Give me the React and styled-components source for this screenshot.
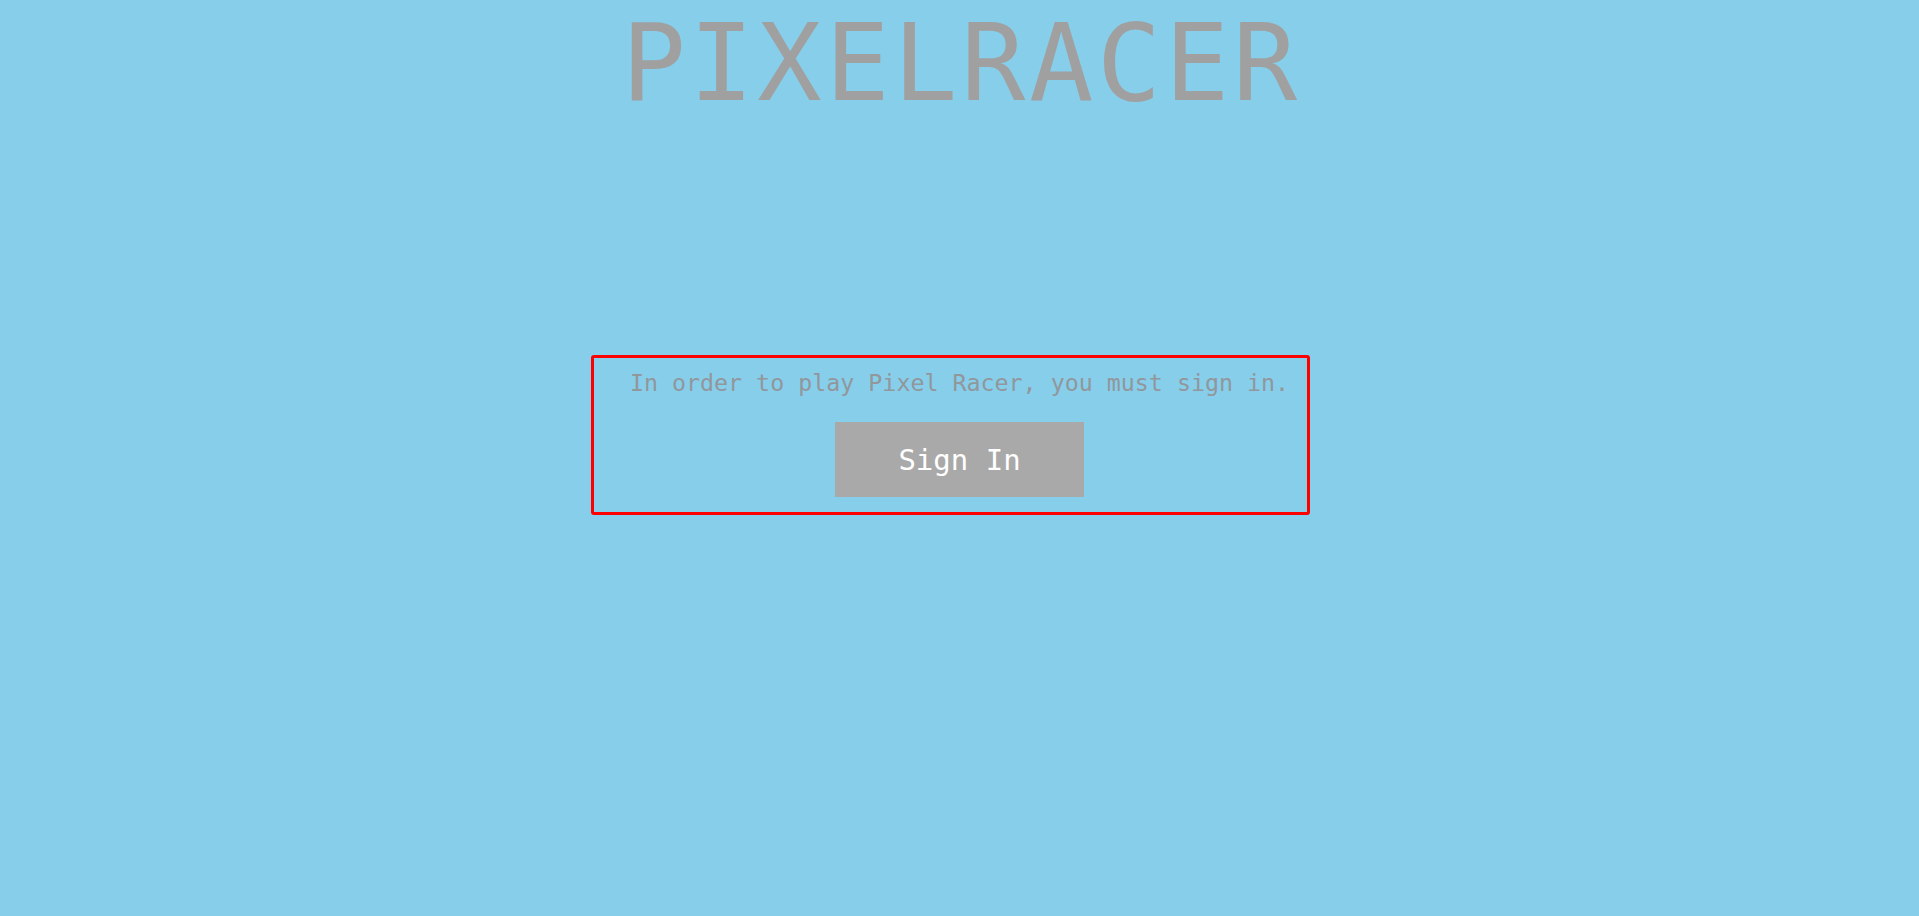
import React from 'react';
import styled, { createGlobalStyle } from 'styled-components';

const GlobalStyle = createGlobalStyle`
    html, body {
        margin: 0;
        padding: 0;
        background-color: #87ceeb;
        font-family: "DejaVu Sans Mono", monospace;
    }
`;

const Page = styled.div`
    min-height: 100vh;
    display: flex;
    flex-direction: column;
    align-items: center;
`;

const Title = styled.h1`
    margin: 0 0 0 3px;
    font-size: 107px;
    font-weight: normal;
    line-height: 127px;
    letter-spacing: 3.5px;
    color: #a0a0a0;
`;

const SignInBox = styled.div`
    margin: 228px 18px 0 0;
    width: 719px;
    box-sizing: border-box;
    border: 3px solid #ff0000;
    border-radius: 3px;
    padding: 11px 20px 15px 38px;
    display: flex;
    flex-direction: column;
    align-items: center;
    gap: 26px;
`;

const Message = styled.p`
    margin: 0;
    font-size: 23.3px;
    line-height: 27px;
    color: #91979b;
    white-space: nowrap;
`;

const SignInButton = styled.button`
    width: 249px;
    height: 75px;
    border: none;
    background-color: #a9a9a9;
    color: #ffffff;
    font-family: "DejaVu Sans Mono", monospace;
    font-size: 29px;
    cursor: pointer;
`;

const App = () => {
    return (
        <>
            <GlobalStyle />
            <Page>
                <Title>PIXELRACER</Title>
                <SignInBox>
                    <Message>In order to play Pixel Racer, you must sign in.</Message>
                    <SignInButton>Sign In</SignInButton>
                </SignInBox>
            </Page>
        </>
    );
};

export default App;
